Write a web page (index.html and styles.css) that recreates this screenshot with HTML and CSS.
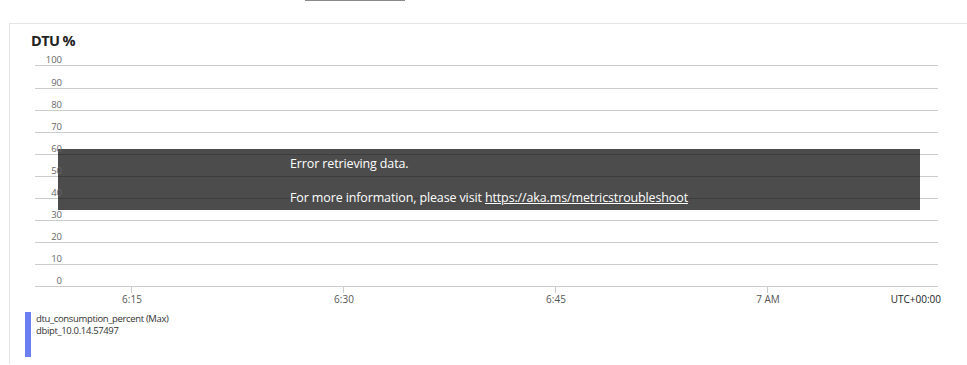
FILE: index.html
```html
<!DOCTYPE html>
<html lang="en">
<head>
    <meta charset="UTF-8">
    <meta name="viewport" content="width=device-width, initial-scale=1.0">
    <title>DTU %</title>
    <link rel="stylesheet" href="styles.css">
</head>
<body>
    <div class="topbar">
        <span class="tab-mark"></span>
    </div>
    <div class="card">
        <h2 class="chart-title">DTU %</h2>
        <div class="chart">
            <div class="grid">
                <div class="grid-row"><span class="y-label">100</span></div>
                <div class="grid-row"><span class="y-label">90</span></div>
                <div class="grid-row"><span class="y-label">80</span></div>
                <div class="grid-row"><span class="y-label">70</span></div>
                <div class="grid-row"><span class="y-label">60</span></div>
                <div class="grid-row"><span class="y-label">50</span></div>
                <div class="grid-row"><span class="y-label">40</span></div>
                <div class="grid-row"><span class="y-label">30</span></div>
                <div class="grid-row"><span class="y-label">20</span></div>
                <div class="grid-row"><span class="y-label">10</span></div>
                <div class="grid-row"><span class="y-label">0</span></div>

                <!-- 错误提示覆盖在图表上 -->
                <div class="overlay">
                    <div class="overlay-text">
                        <p>Error retrieving data.</p>
                        <p>For more information, please visit <a href="https://aka.ms/metricstroubleshoot">https://aka.ms/metricstroubleshoot</a></p>
                    </div>
                </div>
            </div>
            <div class="x-axis">
                <div class="tick"><span class="tick-mark"></span><span class="tick-label">6:15</span></div>
                <div class="tick"><span class="tick-mark"></span><span class="tick-label">6:30</span></div>
                <div class="tick"><span class="tick-mark"></span><span class="tick-label">6:45</span></div>
                <div class="tick"><span class="tick-mark"></span><span class="tick-label">7 AM</span></div>
                <span class="tz">UTC+00:00</span>
            </div>
        </div>
        <div class="legend">
            <span class="legend-swatch"></span>
            <div class="legend-text">
                <div>dtu_consumption_percent (Max)</div>
                <div>dbipt_10.0.14.57497</div>
            </div>
        </div>
    </div>
</body>
</html>
```

FILE: styles.css
```css
body {
    font-family: 'Open Sans', 'Noto Sans', sans-serif;
    color: #333;
    background-color: #fff;
    margin: 0;
    padding: 0;
    overflow: hidden;
}
.topbar {
    height: 23px;
}
.tab-mark {
    display: block;
    margin-left: 305px;
    width: 100px;
    height: 1px;
    background-color: #8a8a8a;
}
.card {
    margin-left: 9px;
    height: 341px;
    padding-top: 7px;
    box-sizing: border-box;
    border-left: 1px solid #e5e5e5;
    border-top: 1px solid #e5e5e5;
}
.chart-title {
    margin: 0 0 0 21px;
    font-size: 14.5px;
    font-weight: 700;
    line-height: 20px;
    color: #222;
    letter-spacing: -0.6px;
}
.chart {
    margin-left: 25px;
    width: 903px;
}
.grid {
    position: relative;
}
.grid-row {
    height: 22px;
    box-sizing: border-box;
    border-bottom: 1px solid #cccccc;
    display: flex;
    align-items: flex-end;
}
.grid-row:first-child { height: 15px; }
.grid-row:nth-child(2) { height: 23px; }
.y-label {
    position: relative;
    z-index: 2;
    width: 27px;
    text-align: right;
    font-size: 9.5px;
    line-height: 10px;
    color: #666;
}
.overlay {
    position: absolute;
    left: 23px;
    top: 98px;
    width: 862px;
    height: 61px;
    background-color: rgba(0,0,0,0.7);
    z-index: 1;
    display: flex;
    justify-content: center;
}
.overlay-text {
    padding-top: 6px;
    color: #fff;
    font-size: 12.5px;
    line-height: 17px;
    letter-spacing: -0.13px;
}
.overlay-text p {
    margin: 0;
}
.overlay-text p + p {
    margin-top: 17px;
}
.overlay-text a {
    color: #fff;
    text-decoration: underline;
}
.x-axis {
    display: flex;
    margin-left: -9px;
    margin-right: -3px;
}
.tick {
    width: 212px;
    display: flex;
    flex-direction: column;
}
.tick-mark {
    width: 1px;
    height: 6px;
    margin-left: 105px;
    background-color: #cccccc;
}
.tick-label {
    text-align: center;
    font-size: 10px;
    line-height: 13px;
    color: #555;
}
.tz {
    margin-left: auto;
    margin-top: 6px;
    font-size: 10px;
    line-height: 13px;
    color: #222;
}
.legend {
    display: flex;
    margin: 6px 0 0 15px;
}
.legend-swatch {
    width: 6px;
    height: 45px;
    background-color: #6c7ff2;
}
.legend-text {
    margin-left: 5px;
    padding-top: 1px;
    font-size: 9.5px;
    line-height: 12px;
    color: #333;
    letter-spacing: -0.35px;
}
```
